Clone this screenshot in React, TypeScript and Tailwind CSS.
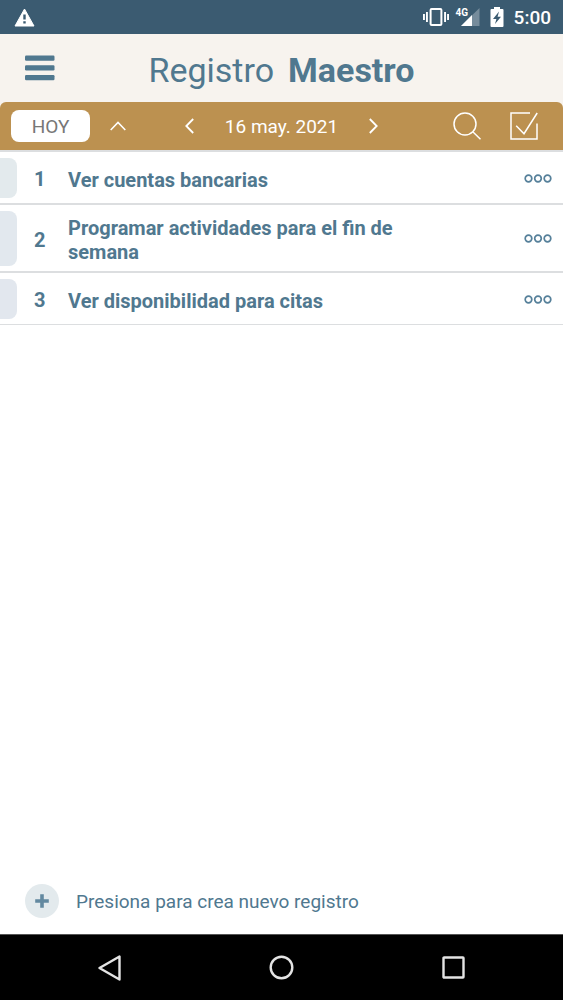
type Task = { id: number; title: string; tab: string };

const tasks: Task[] = [
  { id: 1, title: "Ver cuentas bancarias", tab: "bg-[#e3eaed]" },
  { id: 2, title: "Programar actividades para el fin de semana", tab: "bg-[#e2e8ee]" },
  { id: 3, title: "Ver disponibilidad para citas", tab: "bg-[#e2e7ee]" },
];

function StatusBar() {
  return (
    <div className="flex h-[34px] items-center justify-between bg-[#3b5b71] pl-3.5 pr-3 text-white">
      <svg width="21" height="19" viewBox="0 0 21 19" aria-hidden="true">
        <path d="M10.5 1 20 18H1Z" fill="#fff" stroke="#fff" strokeWidth="1" strokeLinejoin="round" />
        <path d="M9.3 6.5h2.4v5H9.3zM9.3 13.2h2.4v2.3H9.3z" fill="#3b5b71" />
      </svg>
      <div className="flex items-center">
        <svg width="26" height="20" viewBox="0 0 26 20" fill="#fff" aria-hidden="true">
          <path d="M0 7h1.9v6H0zM3 5h1.9v10H3zM21.1 5H23v10h-1.9zM24.1 7H26v6h-1.9z" />
          <rect x="7.6" y="2" width="10.8" height="16" rx="1" fill="none" stroke="#fff" strokeWidth="2" />
        </svg>
        <svg className="ml-1.5" width="25" height="20" viewBox="0 0 25 20" aria-hidden="true">
          <path d="M24.5 1v18H6Z" fill="#fff" fillOpacity=".3" />
          <path d="M17 8v11H6Z" fill="#fff" />
          <text x="0.5" y="9" fill="#fff" fontSize="10" fontWeight="700" fontFamily="Roboto, sans-serif">4G</text>
        </svg>
        <svg className="ml-2.5" width="14" height="20" viewBox="0 0 14 20" aria-hidden="true">
          <path d="M4 0h6v2h2.5q1 0 1 1v16q0 1-1 1h-11q-1 0-1-1V3q0-1 1-1H4z" fill="#fff" />
          <path d="M9 4.5 3 12h3.4L5 17l6-7.2H7.6Z" fill="#3b5b71" />
        </svg>
        <span className="ml-2.5 pt-0.5 text-[19px] leading-6 font-medium">5:00</span>
      </div>
    </div>
  );
}

function Header() {
  return (
    <header className="grid h-[68px] grid-cols-[80px_1fr_80px] items-center bg-[#f7f3ee]">
      <button type="button" aria-label="Menú" className="flex justify-center">
        <svg width="30" height="26" viewBox="0 0 30 26" fill="#50788f" aria-hidden="true">
          <rect x="0" y="0.5" width="29.5" height="5.2" rx="1.2" />
          <rect x="0" y="10.3" width="29.5" height="5.2" rx="1.2" />
          <rect x="0" y="20" width="29.5" height="5.2" rx="1.2" />
        </svg>
      </button>
      <h1 className="flex justify-center gap-3.5 whitespace-nowrap pt-1 text-[34px] leading-10">
        <span>Registro</span>
        <strong>Maestro</strong>
      </h1>
    </header>
  );
}

function Toolbar() {
  return (
    <div className="bg-[#f7f3ee]">
      <nav className="grid h-12 grid-cols-[1fr_auto_1fr] items-center rounded-t-md bg-[#bc9150] px-[11px] text-white">
        <div className="flex items-center gap-5">
          <button type="button" className="h-8 w-[79px] rounded-lg bg-white pt-0.5 text-[19px] leading-6 text-[#777]">
            HOY
          </button>
          <button type="button" aria-label="Contraer">
            <svg width="16" height="10" viewBox="0 0 16 10" fill="none" stroke="currentColor" strokeWidth="1.6" aria-hidden="true">
              <path d="m.7 9 7.3-7.5L15.3 9" />
            </svg>
          </button>
        </div>
        <div className="flex items-center gap-[31px]">
          <button type="button" aria-label="Día anterior">
            <svg width="9" height="16" viewBox="0 0 9 16" fill="none" stroke="currentColor" strokeWidth="1.8" aria-hidden="true">
              <path d="M8.2 1 1.3 8l6.9 7" />
            </svg>
          </button>
          <span className="pt-0.5 text-[19px] leading-6">16 may. 2021</span>
          <button type="button" aria-label="Día siguiente">
            <svg width="9" height="16" viewBox="0 0 9 16" fill="none" stroke="currentColor" strokeWidth="1.8" aria-hidden="true">
              <path d="m.8 1 6.9 7-6.9 7" />
            </svg>
          </button>
        </div>
        <div className="flex items-center justify-end gap-7 pr-3.5">
          <button type="button" aria-label="Buscar">
            <svg width="29" height="28" viewBox="0 0 29 28" fill="none" stroke="currentColor" strokeWidth="1.5" aria-hidden="true">
              <circle cx="12" cy="12" r="11" />
              <path d="m19.8 19.8 7.7 7.4" />
            </svg>
          </button>
          <button type="button" aria-label="Marcar">
            <svg width="28" height="28" viewBox="0 0 28 28" fill="none" stroke="currentColor" strokeWidth="1.5" aria-hidden="true">
              <path d="M20 1H1v26h26V11.5" />
              <path d="m6.2 13.7 7.8 8L27.2 1" />
            </svg>
          </button>
        </div>
      </nav>
    </div>
  );
}

function TaskRow({ task }: { task: Task }) {
  return (
    <li className="flex items-stretch border-b-2 border-[#dcdee0] pt-1.5 pb-[5px] pr-[11px] last:border-b">
      <span className={`w-[17px] rounded-r-lg ${task.tab}`} />
      <span className="flex w-[51px] items-center pl-[17px] pt-0.5 text-[20px] leading-6 font-bold">{task.id}</span>
      <div className="flex min-h-10 flex-1 items-center pt-[5px] pb-0.5">
        <p className="max-w-[360px] text-[20px] leading-6 font-bold">{task.title}</p>
      </div>
      <button type="button" aria-label={`Opciones de ${task.title}`} className="flex items-center">
        <svg width="28" height="9" viewBox="0 0 28 9" fill="none" stroke="#56809a" strokeWidth="1.7" aria-hidden="true">
          <circle cx="4.5" cy="4.5" r="3.3" />
          <circle cx="14" cy="4.5" r="3.3" />
          <circle cx="23.5" cy="4.5" r="3.3" />
        </svg>
      </button>
    </li>
  );
}

function SystemNav() {
  return (
    <nav className="flex h-[66px] items-center justify-center gap-[147px] border-t border-[#555] bg-black text-[#e4e4e4]">
      <button type="button" aria-label="Atrás">
        <svg width="25" height="26" viewBox="0 0 25 26" fill="none" stroke="currentColor" strokeWidth="2.4" strokeLinejoin="round" aria-hidden="true">
          <path d="M22.5 1.5v23L2.5 13Z" />
        </svg>
      </button>
      <button type="button" aria-label="Inicio">
        <svg width="25" height="25" viewBox="0 0 25 25" fill="none" stroke="currentColor" strokeWidth="2.4" aria-hidden="true">
          <circle cx="12.5" cy="12.5" r="10.8" />
        </svg>
      </button>
      <button type="button" aria-label="Recientes">
        <svg width="25" height="25" viewBox="0 0 25 25" fill="none" stroke="currentColor" strokeWidth="2.4" strokeLinejoin="round" aria-hidden="true">
          <rect x="2.5" y="2.5" width="20" height="20" rx=".6" />
        </svg>
      </button>
    </nav>
  );
}

export default function App() {
  return (
    <div className="flex min-h-screen flex-col bg-white font-[Roboto,sans-serif] text-[#50788f]">
      <StatusBar />
      <Header />
      <Toolbar />
      <main className="flex flex-1 flex-col border-t-2 border-[#dcdee0]">
        <ul className="flex-1">
          {tasks.map((task) => (
            <TaskRow key={task.id} task={task} />
          ))}
        </ul>
        <button type="button" className="flex items-center gap-[17px] px-[25px] pb-4 text-left text-[19px] leading-6">
          <span className="flex size-[34px] items-center justify-center rounded-full bg-[#e3eaed]">
            <svg width="14" height="14" viewBox="0 0 14 14" fill="none" stroke="#6389a0" strokeWidth="3.6" strokeLinecap="square" aria-hidden="true">
              <path d="M7 2v10M2 7h10" />
            </svg>
          </span>
          <span className="pt-0.5">Presiona para crea nuevo registro</span>
        </button>
      </main>
      <SystemNav />
    </div>
  );
}
